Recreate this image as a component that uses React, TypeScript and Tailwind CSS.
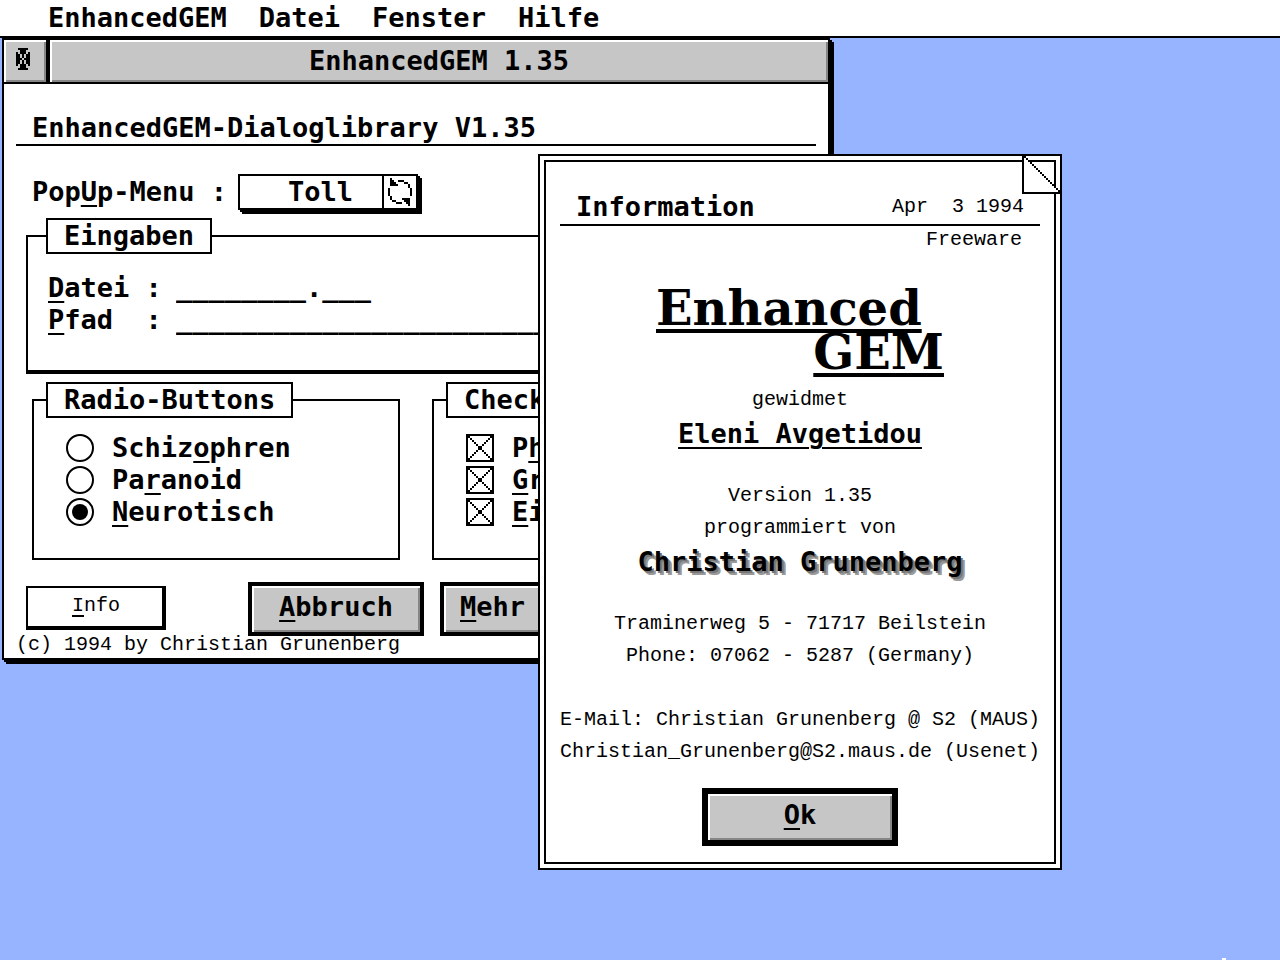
import { useState, type ReactNode } from "react";

const cycleIcon = [
  ".#..........",
  ".##..###....",
  ".###....##..",
  ".####.....#.",
  "..........#.",
  "#..........#",
  "#..........#",
  "#..........#",
  "#..........#",
  ".#..........",
  ".#.....####.",
  "..##....###.",
  "....###..##.",
  "..........#.",
];

const closeIcon = [
  ".#####.",
  "..###..",
  "#.###.#",
  "##.#.##",
  "##.#.##",
  "###.###",
  "##.#.##",
  "##.#.##",
  "#.###.#",
  "..###..",
  ".#####.",
];

const crossIcon = [
  "##############",
  "##..........##",
  "#.#........#.#",
  "#..#......#..#",
  "#...#....#...#",
  "#....#..#....#",
  "#.....##.....#",
  "#.....##.....#",
  "#....#..#....#",
  "#...#....#...#",
  "#..#......#..#",
  "#.#........#.#",
  "##..........##",
  "##############",
];

function Bitmap({ rows, className }: { rows: string[]; className: string }) {
  const d = rows
    .flatMap((row, y) => [...row].map((c, x) => (c === "#" ? `M${x} ${y}h1v1h-1z` : "")))
    .join("");
  return (
    <svg viewBox={`0 0 ${rows[0].length} ${rows.length}`} className={className} shapeRendering="crispEdges">
      <path d={d} />
    </svg>
  );
}

function Key({ children }: { children: ReactNode }) {
  return <span className="underline decoration-2 underline-offset-4">{children}</span>;
}

function Choice({ type, name, defaultChecked, children }: {
  type: "radio" | "checkbox";
  name: string;
  defaultChecked?: boolean;
  children: ReactNode;
}) {
  return (
    <label className="flex h-8 items-center gap-[18px] whitespace-pre">
      <span className="relative size-7 shrink-0">
        <input
          type={type}
          name={name}
          defaultChecked={defaultChecked}
          className="peer block size-7 appearance-none border-2 border-black [&[type=radio]]:rounded-full"
        />
        {type === "radio" ? (
          <span className="pointer-events-none absolute inset-[6px] hidden rounded-full bg-black peer-checked:block" />
        ) : (
          <Bitmap rows={crossIcon} className="pointer-events-none absolute inset-0 hidden size-7 peer-checked:block" />
        )}
      </span>
      <span>{children}</span>
    </label>
  );
}

function Group({ title, className, legendClassName, children }: {
  title: string;
  className: string;
  legendClassName: string;
  children: ReactNode;
}) {
  return (
    <fieldset className={`min-w-0 border-2 border-black ${className}`}>
      <legend className={`h-9 border-2 border-black bg-white leading-8 ${legendClassName}`}>{title}</legend>
      {children}
    </fieldset>
  );
}

const bevel =
  "bg-[#c6c6c6] border-black shadow-[inset_2px_2px_0_#fff,inset_-2px_-2px_0_#868686]";

function MainWindow() {
  const [popup, setPopup] = useState("Toll");

  return (
    <section className="absolute top-[38px] left-[2px] w-[828px] border-2 border-black bg-white shadow-[2px_2px_0_#000,4px_4px_0_#000]">
      <header className="flex h-11 border-b-2 border-black">
        <button aria-label="Schließen" className={`flex w-11 shrink-0 items-center border-r-2 pb-1 pl-3 ${bevel}`}>
          <Bitmap rows={closeIcon} className="h-[22px] w-[14px]" />
        </button>
        <h1 className={`flex-1 border-l-2 text-center leading-[42px] ${bevel}`}>EnhancedGEM 1.35</h1>
      </header>

      <div className="px-3 pb-1">
        <h2 className="mt-7 border-b-2 border-black pl-4 leading-8">EnhancedGEM-Dialoglibrary V1.35</h2>

        <div className="mt-7 flex h-9 pl-4">
          <label htmlFor="popup" className="w-[206px] leading-9 whitespace-pre">
            Pop<Key>U</Key>p-Menu :
          </label>
          <div className="relative h-9 w-[180px] border-2 border-black shadow-[2px_2px_0_#000,4px_4px_0_#000]">
            <select
              id="popup"
              value={popup}
              onChange={(e) => setPopup(e.target.value)}
              className="block h-8 w-full appearance-none bg-white pl-12 leading-8"
            >
              <option>Toll</option>
              <option>Super</option>
            </select>
            <span className="pointer-events-none absolute top-0 right-0 flex h-8 w-[34px] items-center justify-center border-l-2 border-black">
              <Bitmap rows={cycleIcon} className="h-7 w-6" />
            </span>
          </div>
        </div>

        <Group title="Eingaben" className="mt-2 mr-1 ml-[10px] h-[156px] shadow-[inset_0_-2px_0_#000]" legendClassName="ml-[18px] px-4">
          <div className="mt-[18px] pl-5">
            <div className="flex h-8 leading-8">
              <label htmlFor="datei" className="w-32 whitespace-pre"><Key>D</Key>atei :</label>
              <input id="datei" defaultValue="________.___" className="w-0 flex-1 outline-none" />
            </div>
            <div className="flex h-8 leading-8">
              <label htmlFor="pfad" className="w-32 whitespace-pre"><Key>P</Key>fad  :</label>
              <input id="pfad" defaultValue="______________________________________" className="w-0 flex-1 outline-none" />
            </div>
          </div>
        </Group>

        <div className="mt-2 grid grid-cols-2 gap-8 px-4">
          <Group title="Radio-Buttons" className="h-[178px]" legendClassName="ml-3 px-4">
            <div className="mt-[14px] pl-8">
              <Choice type="radio" name="zustand">Schiz<Key>o</Key>phren</Choice>
              <Choice type="radio" name="zustand">Pa<Key>r</Key>anoid</Choice>
              <Choice type="radio" name="zustand" defaultChecked><Key>N</Key>eurotisch</Choice>
            </div>
          </Group>
          <Group title="Check-Buttons" className="h-[178px]" legendClassName="ml-3 px-4">
            <div className="mt-[14px] pl-8">
              <Choice type="checkbox" name="ph" defaultChecked>P<Key>h</Key></Choice>
              <Choice type="checkbox" name="gr" defaultChecked><Key>G</Key>r</Choice>
              <Choice type="checkbox" name="ei" defaultChecked><Key>E</Key>i</Choice>
            </div>
          </Group>
        </div>

        <div className="mt-[22px] flex items-start pl-[10px]">
          <button className="mt-1 h-11 w-[140px] border-2 border-black pb-1 font-['Liberation_Mono',monospace] text-[20px] font-normal shadow-[inset_-2px_-2px_0_#000]">
            <Key>I</Key>nfo
          </button>
          <button className={`ml-[82px] h-[54px] w-44 border-4 pb-1 ${bevel}`}><Key>A</Key>bbruch</button>
          <button className={`ml-4 h-[54px] w-44 border-4 pb-1 pl-4 text-left ${bevel}`}><Key>M</Key>ehr</button>
        </div>
        <p className="font-['Liberation_Mono',monospace] text-[20px] leading-[18px] font-normal">
          (c) 1994 by Christian Grunenberg
        </p>
      </div>
    </section>
  );
}

function InfoDialog() {
  return (
    <section role="dialog" aria-label="Information" className="absolute top-[154px] left-[538px] w-[524px] border-2 border-black bg-white p-1">
      <div className="flex flex-col items-center border-2 border-black px-3 pb-4 font-['Liberation_Mono',monospace] text-[20px] leading-8 font-normal whitespace-pre">
        <header className="mt-7 flex h-9 w-[480px] items-center justify-between border-b-2 border-black px-4">
          <h2 className="font-['DejaVu_Sans_Mono',monospace] text-[27px] font-bold">Information</h2>
          <span>Apr  3 1994</span>
        </header>
        <p className="h-8 self-end pr-5 leading-7">Freeware</p>

        <div className="mt-7 w-[288px] font-['DejaVu_Serif',serif] text-[48px] leading-[44px] font-bold">
          <p className="underline decoration-4 underline-offset-4">Enhanced</p>
          <p className="text-right underline decoration-4 underline-offset-4">GEM</p>
        </div>

        <p className="mt-[10px]">gewidmet</p>
        <p className="font-['DejaVu_Sans_Mono',monospace] text-[27px] leading-9 font-bold underline decoration-2 underline-offset-4">Eleni Avgetidou</p>
        <p className="mt-7">Version 1.35</p>
        <p>programmiert von</p>
        <p className="font-['DejaVu_Sans_Mono',monospace] text-[27px] leading-9 font-bold [text-shadow:2px_2px_0_#777,4px_4px_0_#999]">Christian Grunenberg</p>
        <p className="mt-7">Traminerweg 5 - 71717 Beilstein</p>
        <p>Phone: 07062 - 5287 (Germany)</p>
        <p className="mt-8">E-Mail: Christian Grunenberg @ S2 (MAUS)</p>
        <p>Christian_Grunenberg@S2.maus.de (Usenet)</p>
        <button className={`mt-5 h-[58px] w-[196px] border-[6px] pb-1 font-['DejaVu_Sans_Mono',monospace] text-[27px] font-bold ${bevel}`}>
          <Key>O</Key>k
        </button>
      </div>
      <svg viewBox="0 0 20 20" className="absolute -top-[2px] -right-[2px] size-10" shapeRendering="crispEdges">
        <path d="M0 0v20h20z" fill="white" />
        <path d="M0 0h20v20H0zM1 1v18h18V1z" fillRule="evenodd" />
        {Array.from({ length: 18 }, (_, i) => (
          <rect key={i} x={i + 1} y={i + 1} width="1" height="1" />
        ))}
      </svg>
    </section>
  );
}

export default function App() {
  return (
    <main className="relative min-h-screen overflow-hidden bg-[#96b4ff] font-['DejaVu_Sans_Mono',monospace] text-[27px] font-bold text-black">
      <nav className="flex h-[38px] gap-8 border-b-2 border-black bg-white pl-12 leading-9">
        <button>EnhancedGEM</button>
        <button>Datei</button>
        <button>Fenster</button>
        <button>Hilfe</button>
      </nav>
      <MainWindow />
      <InfoDialog />
      <span className="absolute bottom-0 left-[1222px] h-[2px] w-1 bg-white" />
    </main>
  );
}
